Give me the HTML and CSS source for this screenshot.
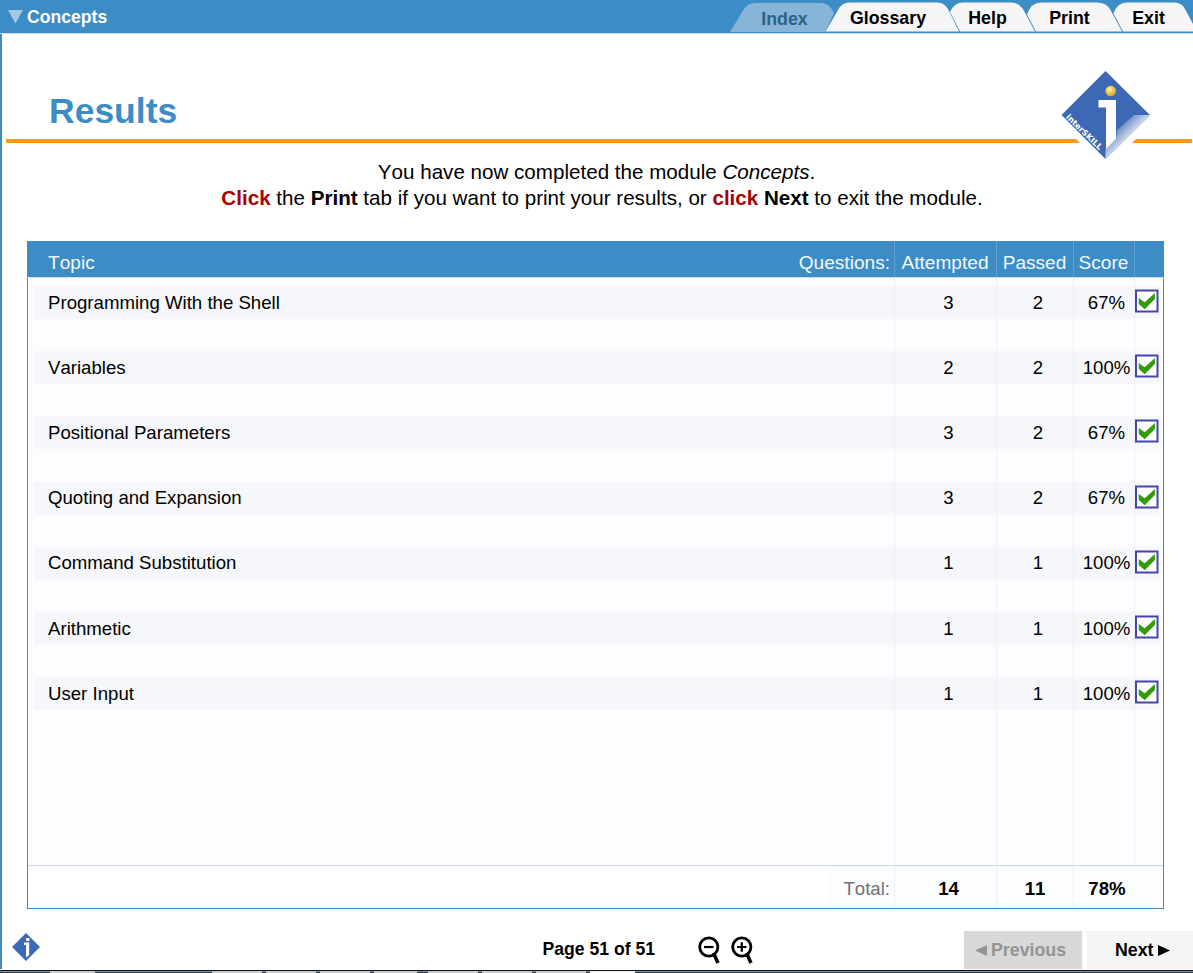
FILE: index.html
```html
<!DOCTYPE html>
<html lang="en">
<head>
<meta charset="utf-8">
<title>Concepts - Results</title>
<link rel="stylesheet" href="styles.css">
</head>
<body>
<div class="app">
  <header class="topbar">
    <div class="module"><svg class="caret" width="16" height="14" viewBox="0 0 16 14"><path d="M0 0H15L7.5 13.5Z" fill="#a3cae5"/></svg><span>Concepts</span></div>
    <nav class="tabs">
      <svg class="tab-shapes" width="465" height="33" viewBox="728 0 465 33">
        <path d="M730 32L744 9Q748 3 755 3H822Q829 3 834 13L825 32Z" fill="#87b5d8"/>
        <path d="M825.500 31.500L838 10Q842 2.500 849 2.500H938Q944 2.500 948 9L959 31.500Z" fill="#f5f5f5"/>
        <path d="M960 31.500L950 12Q954 2.500 963 2.500H1011Q1019 2.500 1023 9L1035 31.500Z" fill="#f5f5f5"/>
        <path d="M1036 31.500L1027 14.500Q1031 2.500 1041 2.500H1097Q1106 2.500 1110 9L1122 31.500Z" fill="#f5f5f5"/>
        <path d="M1123 31.500L1113.500 13.500Q1117 2.500 1127 2.500H1174Q1182 2.500 1185 9L1193 24V31.500Z" fill="#f5f5f5"/>
      </svg>
      <a class="tab tab-index">Index</a>
      <a class="tab tab-glossary">Glossary</a>
      <a class="tab tab-help">Help</a>
      <a class="tab tab-print">Print</a>
      <a class="tab tab-exit">Exit</a>
    </nav>
  </header>

  <main class="page">
    <div class="heading">
      <h1>Results</h1>
      <svg class="logo" width="112" height="100" viewBox="1050 65 112 100">
        <defs>
          <linearGradient id="fade" gradientUnits="userSpaceOnUse" x1="1115" y1="123" x2="1130" y2="138"><stop offset="0" stop-color="#3d68b5"/><stop offset="1" stop-color="#dfe6f3"/></linearGradient>
          <radialGradient id="ball" cx=".4" cy=".35" r=".65"><stop offset="0" stop-color="#fff4c8"/><stop offset=".5" stop-color="#efc850"/><stop offset="1" stop-color="#d4a53b"/></radialGradient>
        </defs>
        <path d="M1106 61L1160 115L1106 169L1052 115Z" fill="#fff"/>
        <path d="M1105.500 71L1150 115L1105.500 159L1061.500 115Z" fill="#3d68b5"/>
        <path d="M1150 115L1105.500 159V149L1116 139L1117 130L1134 115Z" fill="url(#fade)"/>
        <path d="M1098.500 100H1116V139L1106 149V107.500H1098.500Z" fill="#fff"/>
        <circle cx="1110.700" cy="91" r="5.300" fill="url(#ball)"/>
        <text class="logo-word" transform="translate(1065.500 117.500) rotate(44.500)" textLength="47" lengthAdjust="spacing">interSKILL</text>
      </svg>
    </div>

    <p class="intro">You have now completed the module <i>Concepts</i>.</p>
    <p class="intro intro-second"><b class="red">Click</b> the <b>Print</b> tab if you want to print your results, or <b class="red">click</b> <b>Next</b> to exit the module.</p>

    <svg width="0" height="0" class="defs">
      <symbol id="check" viewBox="0 0 24 24">
        <rect x="1" y="1.500" width="21.500" height="21" fill="#fff" stroke="#4547a8" stroke-width="2"/>
        <path d="M3.700 9L9.700 13.200L19.900 4V10L9.700 20.200L3.700 15Z" fill="#349b09"/>
      </symbol>
    </svg>

    <section class="results">
      <div class="cols head"><span class="topic">Topic</span><span class="q">Questions:</span><span class="a">Attempted</span><span class="p">Passed</span><span class="s">Score</span><span></span></div>
      <div class="rows">
        <div class="cols row"><span class="topic">Programming With the Shell</span><span></span><span class="num">3</span><span class="num">2</span><span class="pct">67%</span><svg class="check"><use href="#check"/></svg></div>
        <div class="cols row"><span class="topic">Variables</span><span></span><span class="num">2</span><span class="num">2</span><span class="pct">100%</span><svg class="check"><use href="#check"/></svg></div>
        <div class="cols row"><span class="topic">Positional Parameters</span><span></span><span class="num">3</span><span class="num">2</span><span class="pct">67%</span><svg class="check"><use href="#check"/></svg></div>
        <div class="cols row"><span class="topic">Quoting and Expansion</span><span></span><span class="num">3</span><span class="num">2</span><span class="pct">67%</span><svg class="check"><use href="#check"/></svg></div>
        <div class="cols row"><span class="topic">Command Substitution</span><span></span><span class="num">1</span><span class="num">1</span><span class="pct">100%</span><svg class="check"><use href="#check"/></svg></div>
        <div class="cols row"><span class="topic">Arithmetic</span><span></span><span class="num">1</span><span class="num">1</span><span class="pct">100%</span><svg class="check"><use href="#check"/></svg></div>
        <div class="cols row"><span class="topic">User Input</span><span></span><span class="num">1</span><span class="num">1</span><span class="pct">100%</span><svg class="check"><use href="#check"/></svg></div>
      </div>
      <div class="cols total"><span></span><span class="q">Total:</span><b class="num">14</b><b class="num passed">11</b><b class="pct">78%</b></div>
    </section>
  </main>

  <footer class="bottom">
    <svg class="mini" width="28" height="28" viewBox="0 0 28 28"><path d="M14 0L28 14L14 28L0 14Z" fill="#3d68b5"/><path d="M12 9.500H17.200V22L14 24.500V12H12Z" fill="#fff"/><rect x="14" y="5" width="3.600" height="3" rx="1" fill="#fff"/></svg>
    <span class="pageno">Page 51 of 51</span>
    <div class="zoom">
      <svg width="22" height="28" viewBox="0 0 22 28"><circle cx="10.800" cy="11" r="9.100" fill="none" stroke="#000" stroke-width="2.800"/><path d="M6 11H15.500" stroke="#000" stroke-width="2.200"/><path d="M15.500 17L20 27" stroke="#000" stroke-width="3.500"/></svg>
      <svg width="22" height="28" viewBox="0 0 22 28"><circle cx="10.800" cy="11" r="9.100" fill="none" stroke="#000" stroke-width="2.800"/><path d="M6 11H15.500M10.800 6.200V15.700" stroke="#000" stroke-width="2.200"/><path d="M15.500 17L20 27" stroke="#000" stroke-width="3.500"/></svg>
    </div>
    <button class="btn prev"><svg width="12" height="11" viewBox="0 0 12 11"><path d="M12 0V11L0 5.500Z" fill="#949494"/></svg>Previous</button>
    <button class="btn next">Next<svg width="12" height="11" viewBox="0 0 12 11"><path d="M0 0V11L12 5.500Z" fill="#000"/></svg></button>
  </footer>
</div>
<div class="taskbar">
  <svg width="1193" height="3" viewBox="0 0 1193 3">
    <g fill="none"><path d="M0 1.500H1193" stroke="#8796a3"/><path d="M0 2.500H1193" stroke="#273544"/></g>
    <g fill="#c9cccc"><rect x="50" y="1" width="45" height="2"/><rect x="212" y="1" width="50" height="2"/><rect x="266" y="1" width="50" height="2"/><rect x="320" y="1" width="50" height="2"/><rect x="374" y="1" width="43" height="2"/><rect x="428" y="1" width="50" height="2"/><rect x="482" y="1" width="50" height="2"/><rect x="536" y="1" width="50" height="2"/><rect x="590" y="1" width="45" height="2" fill="#f4f4f4"/></g>
    <path d="M0 .5H1193" stroke="#0b121b"/>
  </svg>
</div>
</body>
</html>
```
FILE: styles.css
```css
* { box-sizing: border-box; }
body { margin: 0; width: 1193px; height: 973px; overflow: hidden; background: #fff; color: #000; font-family: "Liberation Sans", Arial, sans-serif; font-kerning: none; }
.app { height: 969px; display: flex; flex-direction: column; background: linear-gradient(#3c8dc5, #3c8dc5) left / 2px 100% no-repeat; }
.topbar { height: 34px; flex: none; display: flex; justify-content: space-between; background: #3c8dc5; border-bottom: 1px solid #c9dff0; }
.module { display: flex; padding: 10px 0 0 8px; color: #fff; font-size: 17.6px; font-weight: bold; line-height: 14px; }
.module span { margin-left: 3px; }
.tabs { position: relative; width: 465px; display: flex; }
.tab-shapes { position: absolute; left: 0; top: 0; }
.tab { position: relative; flex: none; font-size: 17.8px; font-weight: bold; line-height: 36px; text-align: center; }
.tab-index { width: 113px; color: #2b6289; line-height: 38px; }
.tab-glossary { width: 94px; }
.tab-help { width: 105px; }
.tab-print { width: 59px; }
.tab-exit { width: 99px; }

.page { height: 875px; flex: none; }
.heading { height: 110px; margin: 0 1px 0 6px; display: flex; justify-content: space-between; background: linear-gradient(#f79b17, #f79b17) 0 105px / 100% 4px no-repeat; }
h1 { margin: 57px 0 0 43px; font-size: 35.5px; line-height: 40px; color: #3c8dc5; }
.logo { margin: 31px 30px 0 0; flex: none; }
.logo-word { font: bold 8px "DejaVu Sans", sans-serif; fill: #fff; }
.intro { margin: 15px 0 0; height: 26px; text-align: center; font-size: 20.6px; line-height: 26px; white-space: nowrap; }
.intro-second { margin: 0; padding-left: 11px; }
.red { color: #a90003; }
.defs { display: block; }

.results { width: 1137px; height: 668px; margin: 30px 0 0 27px; border: 1px solid #3c8dc5; border-top: 0; font-size: 18.64px; background: #fcfdff; }
.cols { display: grid; grid-template-columns: 700px 166px 102px 77px 61px 29px; align-items: center; white-space: nowrap; }
.head { height: 37px; margin: 0 -1px; padding: 7px 0 0 1px; background: linear-gradient(#64a1d3, #64a1d3) 867px 0 / 1px 100% no-repeat, linear-gradient(#64a1d3, #64a1d3) 969px 0 / 1px 100% no-repeat, linear-gradient(#64a1d3, #64a1d3) 1046px 0 / 1px 100% no-repeat, linear-gradient(#64a1d3, #64a1d3) 1107px 0 / 1px 100% no-repeat, #3c8dc5; border-bottom: 1px solid #cfdcf4; color: #f3f8fc; font-size: 19.1px; }
.topic { padding-left: 20px; }
.q { text-align: right; padding-right: 4px; }
.a, .p, .s { text-align: center; }
.rows { height: 587px; padding: 8px 3px 0 6px; background: linear-gradient(#eeeffa, #eeeffa) 866px 0 / 1px 100% no-repeat, linear-gradient(#eeeffa, #eeeffa) 968px 0 / 1px 100% no-repeat, linear-gradient(#eeeffa, #eeeffa) 1045px 0 / 1px 100% no-repeat, linear-gradient(#eeeffa, #eeeffa) 1106px 0 / 1px 100% no-repeat; }
.row { height: 33px; margin-bottom: 32.220px; grid-template-columns: 694px 166px 102px 77px 61px 26px; background: rgba(225, 228, 238, .24); }
.row .topic { padding-left: 14px; }
.num { text-align: center; padding-left: 7px; }
.total .passed { padding-left: 1px; }
.pct { text-align: center; padding-left: 7px; }
.row .pct { padding-left: 3px; margin-right: -3px; }
.check { width: 24px; height: 24px; margin: -3px 0 0 1px; }
.total { height: 43px; border-top: 1px solid #cbd5ef; padding-top: 4px; background: linear-gradient(#fff, #fff) 0 0 / 800px 100% no-repeat, linear-gradient(#eeeffa, #eeeffa) 866px 0 / 1px 100% no-repeat, linear-gradient(#eeeffa, #eeeffa) 968px 0 / 1px 100% no-repeat, linear-gradient(#eeeffa, #eeeffa) 1045px 0 / 1px 100% no-repeat; }
.total .q { color: #6f7276; }

.bottom { height: 60px; flex: none; display: flex; align-items: flex-start; padding-top: 22px; }
.mini { margin: 2px 0 0 12px; flex: none; }
.pageno { margin: 7px 0 0 502.500px; font-size: 17.600px; font-weight: bold; line-height: 22px; white-space: nowrap; width: 115px; }
.zoom { display: flex; flex: none; gap: 11px; margin: 5px 0 0 40px; width: 55px; }
.zoom svg { flex: none; }
.btn { display: flex; align-items: center; gap: 4px; height: 38px; border: 0; flex: none; font: bold 17.8px "Liberation Sans", Arial, sans-serif; }
.prev { width: 118px; margin-left: 211.500px; padding: 1px 0 0 11px; background: #d8d8d8; color: #949494; }
.next { width: 106px; margin-left: 5px; padding: 1px 0 0 28px; background: #f5f5f5; }
.taskbar { height: 4px; padding-top: 1px; }
.taskbar svg { display: block; }
```
